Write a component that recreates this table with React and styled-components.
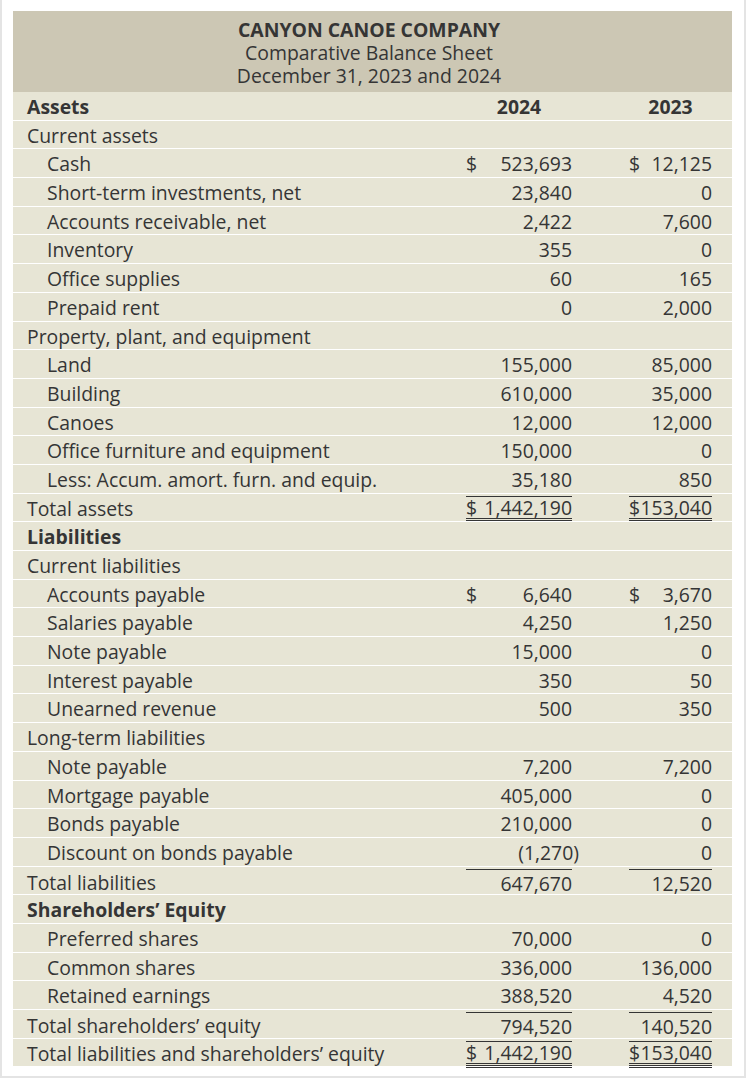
import styled, { createGlobalStyle } from "styled-components";

const GlobalStyle = createGlobalStyle`
  html, body {
    margin: 0;
    padding: 0;
    background: #fff;
  }
  body {
    font-family: "Open Sans", "Noto Sans", sans-serif;
    color: #353535;
  }
`;

const rows = [
  { label: "Assets", kind: "head" },
  { label: "Current assets" },
  { label: "Cash", indent: true, a: "523,693", b: "12,125", dollar: true },
  { label: "Short-term investments, net", indent: true, a: "23,840", b: "0" },
  { label: "Accounts receivable, net", indent: true, a: "2,422", b: "7,600" },
  { label: "Inventory", indent: true, a: "355", b: "0" },
  { label: "Office supplies", indent: true, a: "60", b: "165" },
  { label: "Prepaid rent", indent: true, a: "0", b: "2,000" },
  { label: "Property, plant, and equipment" },
  { label: "Land", indent: true, a: "155,000", b: "85,000" },
  { label: "Building", indent: true, a: "610,000", b: "35,000" },
  { label: "Canoes", indent: true, a: "12,000", b: "12,000" },
  { label: "Office furniture and equipment", indent: true, a: "150,000", b: "0" },
  { label: "Less: Accum. amort. furn. and equip.", indent: true, a: "35,180", b: "850" },
  { label: "Total assets", a: "1,442,190", b: "153,040", dollar: true, total: true },
  { label: "Liabilities", kind: "bold" },
  { label: "Current liabilities" },
  { label: "Accounts payable", indent: true, a: "6,640", b: "3,670", dollar: true },
  { label: "Salaries payable", indent: true, a: "4,250", b: "1,250" },
  { label: "Note payable", indent: true, a: "15,000", b: "0" },
  { label: "Interest payable", indent: true, a: "350", b: "50" },
  { label: "Unearned revenue", indent: true, a: "500", b: "350" },
  { label: "Long-term liabilities" },
  { label: "Note payable", indent: true, a: "7,200", b: "7,200" },
  { label: "Mortgage payable", indent: true, a: "405,000", b: "0" },
  { label: "Bonds payable", indent: true, a: "210,000", b: "0" },
  { label: "Discount on bonds payable", indent: true, a: "(1,270)", b: "0", paren: true },
  { label: "Total liabilities", a: "647,670", b: "12,520", sub: true },
  { label: "Shareholders’ Equity", kind: "bold" },
  { label: "Preferred shares", indent: true, a: "70,000", b: "0" },
  { label: "Common shares", indent: true, a: "336,000", b: "136,000" },
  { label: "Retained earnings", indent: true, a: "388,520", b: "4,520" },
  { label: "Total shareholders’ equity", a: "794,520", b: "140,520", sub: true },
  { label: "Total liabilities and shareholders’ equity", a: "1,442,190", b: "153,040", dollar: true, total: true },
];

const Frame = styled.div`
  width: 746px;
  box-sizing: border-box;
  border: 2px solid #e4e4e4;
  border-top: none;
  padding: 11px 12px 10px 11px;
`;

const Table = styled.div`
  display: flex;
  flex-direction: column;
  gap: 1px;
  background: #fff;
`;

const Header = styled.div`
  background: #ccc7b4;
  padding: 7px 7px 5px 0;
  text-align: center;
  font-size: 19.4px;
  line-height: 23px;
  margin-bottom: -1px;
`;

const Title = styled.div`
  font-weight: 700;
`;

const Row = styled.div`
  display: grid;
  grid-template-columns: 1fr 106px 83px;
  column-gap: 57px;
  align-items: stretch;
  height: 27.7px;
  padding: 0 20px 0 14px;
  background: #e7e5d5;
  font-size: 19.4px;
`;

const Label = styled.div`
  display: flex;
  align-items: center;
  padding-top: 1px;
  padding-left: ${(p) => (p.$indent ? "20px" : "0")};
  font-weight: ${(p) => (p.$bold ? 700 : 400)};
  white-space: nowrap;
`;

const YearHead = styled.div`
  display: flex;
  align-items: center;
  justify-content: center;
  padding-top: 1px;
  font-weight: 700;
`;

const Value = styled.div`
  display: flex;
  align-items: center;
  justify-content: space-between;
  box-sizing: border-box;
  padding-top: ${(p) => (p.$top ? "0" : "1px")};
  margin-top: ${(p) => (p.$top ? "2px" : "0")};
  margin-right: ${(p) => (p.$paren ? "-7px" : "0")};
  border-top: ${(p) => (p.$top ? "1px solid #353535" : "none")};
  border-bottom: ${(p) => (p.$double ? "3px double #353535" : "none")};
  margin-bottom: ${(p) => (p.$double ? "-1px" : "0")};
`;

const Underlined = styled.div`
  flex: 1;
  display: flex;
  justify-content: space-between;
  line-height: 22px;
  background: linear-gradient(#353535, #353535) no-repeat;
  background-size: 100% 1px;
  background-position: 0 21px;
`;

function Amount({ value, dollar, top, double, paren }) {
  const content = (
    <>
      <span>{dollar ? "$" : ""}</span>
      <span>{value}</span>
    </>
  );
  return (
    <Value $top={top} $double={double} $paren={paren}>
      {double ? <Underlined>{content}</Underlined> : content}
    </Value>
  );
}

export default function App() {
  return (
    <>
      <GlobalStyle />
      <Frame>
        <Table>
          <Header>
            <Title>CANYON CANOE COMPANY</Title>
            <div>Comparative Balance Sheet</div>
            <div>December 31, 2023 and 2024</div>
          </Header>
          {rows.map((r, i) =>
            r.kind === "head" ? (
              <Row key={i}>
                <Label $bold>{r.label}</Label>
                <YearHead>2024</YearHead>
                <YearHead>2023</YearHead>
              </Row>
            ) : (
              <Row key={i}>
                <Label $indent={r.indent} $bold={r.kind === "bold"}>
                  {r.label}
                </Label>
                {r.a !== undefined ? (
                  <>
                    <Amount
                      value={r.a}
                      dollar={r.dollar}
                      top={r.total || r.sub}
                      double={r.total}
                      paren={r.paren}
                    />
                    <Amount
                      value={r.b}
                      dollar={r.dollar}
                      top={r.total || r.sub}
                      double={r.total}
                    />
                  </>
                ) : (
                  <>
                    <div />
                    <div />
                  </>
                )}
              </Row>
            )
          )}
        </Table>
      </Frame>
    </>
  );
}
